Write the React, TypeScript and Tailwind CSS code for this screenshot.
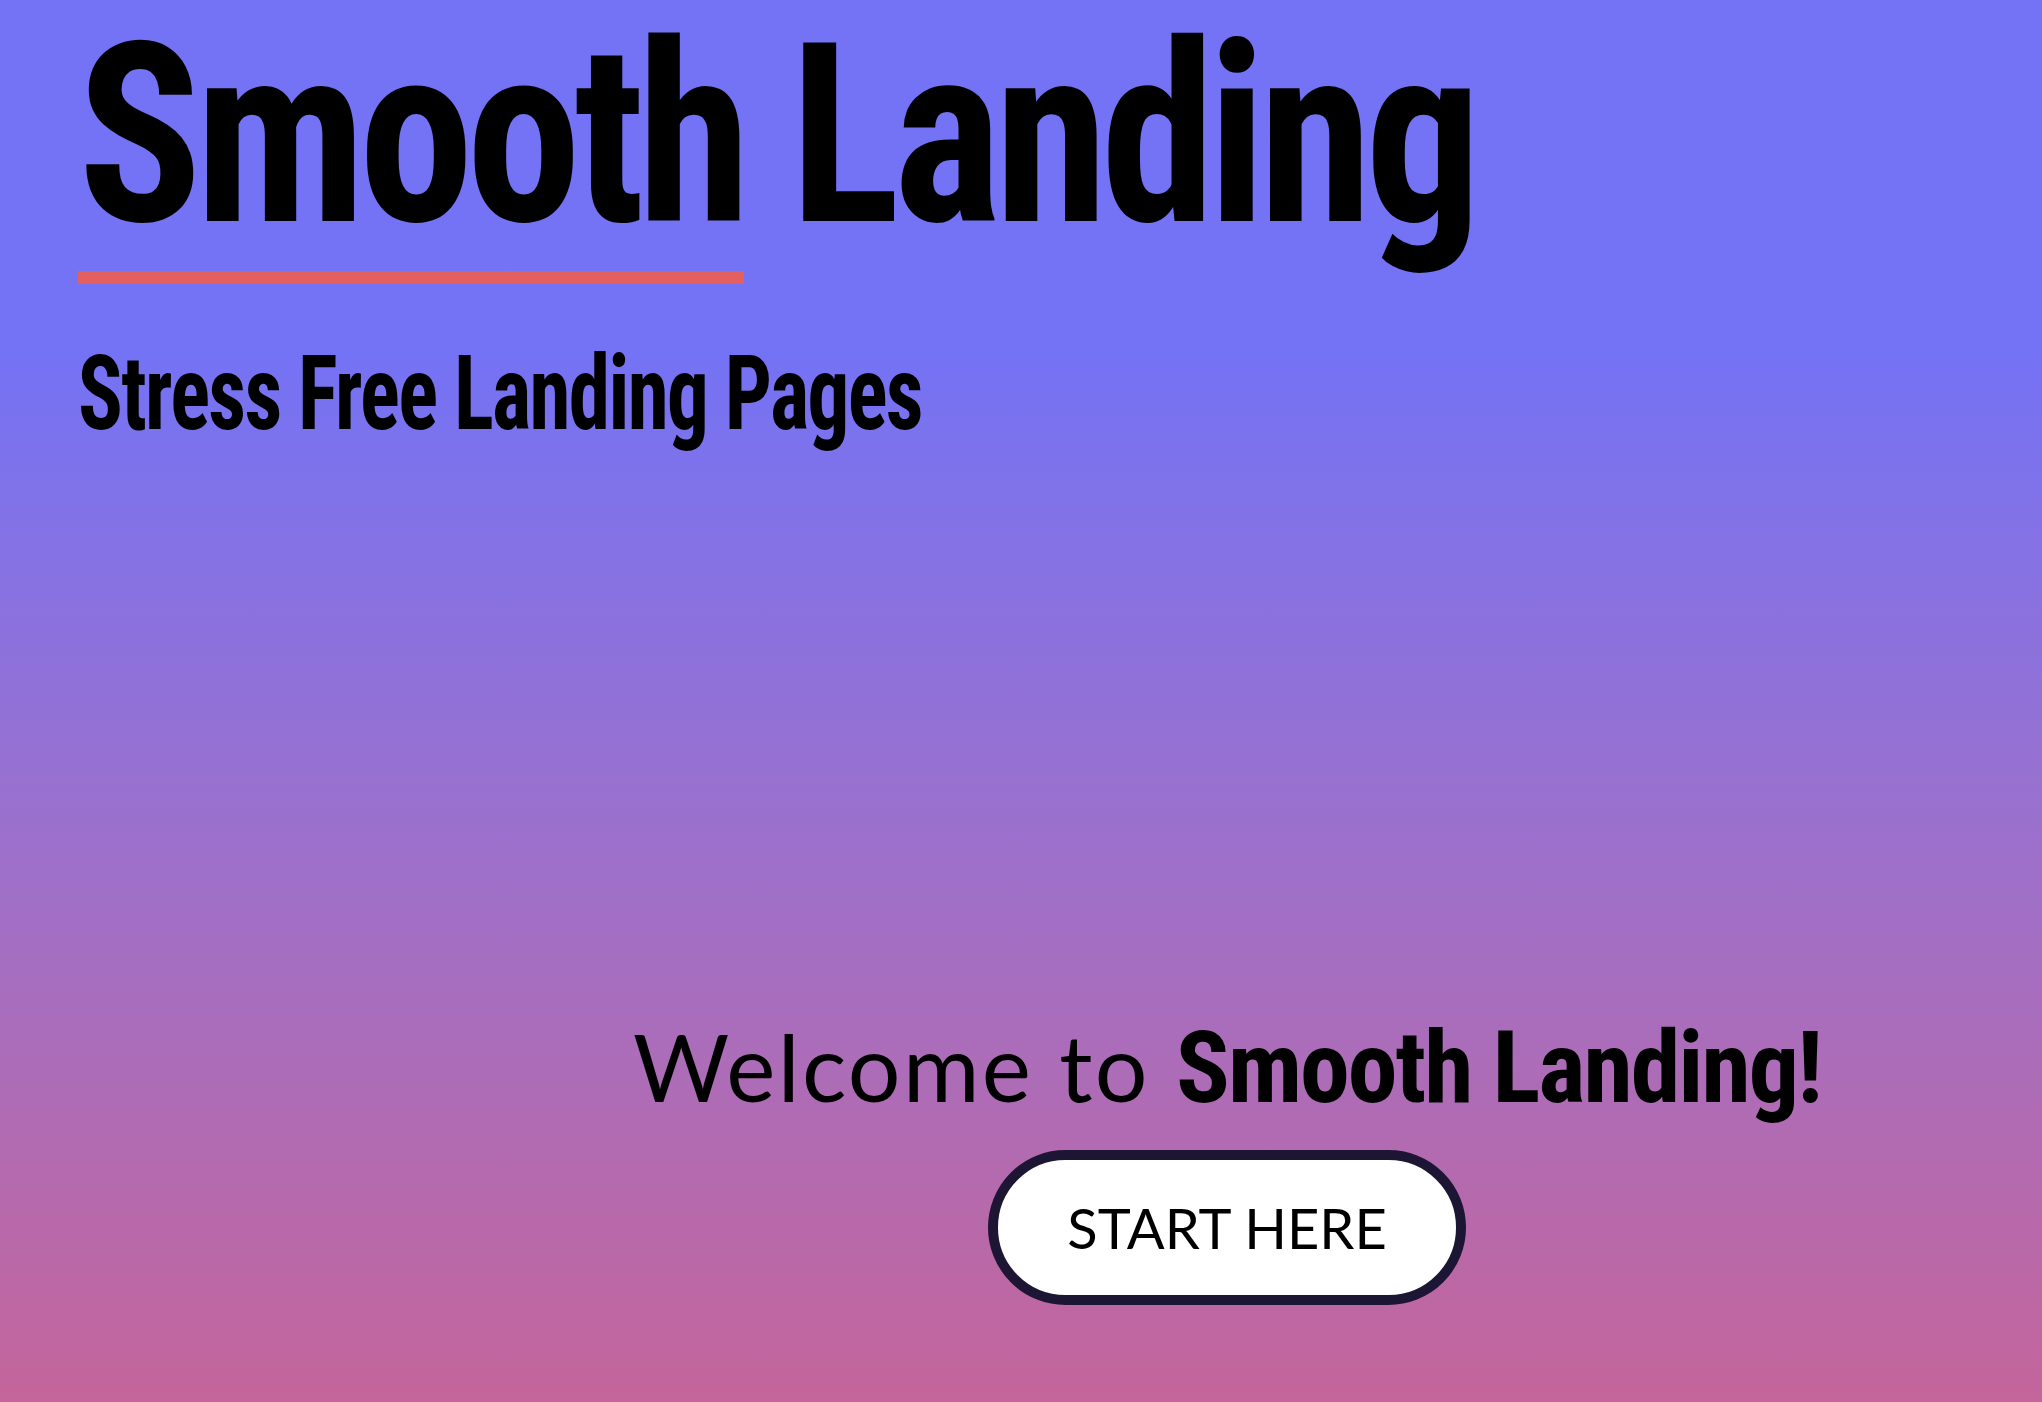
const display = "font-['Roboto_Condensed','Open_Sans',sans-serif]";

const Hero = () => {
  return (
    <div className="flex flex-col pl-[78px] pt-[11px]">
      <h1 className={`${display} origin-left scale-x-[0.92] text-[250px] font-bold leading-none tracking-[-0.03em] text-black`}>
        Smooth Landing
      </h1>
      <div className="mt-[10px] h-[13px] w-[666px] bg-[#e45f5f]" />
      <h2 className={`${display} mt-[58px] origin-left scale-x-[0.8] text-[104px] font-bold leading-none tracking-[-0.02em] text-black`}>
        Stress Free Landing Pages
      </h2>
    </div>
  );
};

const Welcome = () => {
  return (
    <div className="mt-[572px] flex flex-col items-center pl-[412px]">
      <p className="font-['Lato',sans-serif] text-[93px] leading-none tracking-[0.025em] text-black">
        Welcome to{" "}
        <span className={`${display} text-[100px] font-bold tracking-[-0.02em]`}>Smooth Landing!</span>
      </p>
      <button className="mt-[32px] flex h-[155px] w-[478px] items-center justify-center rounded-full border-[10px] border-[#1c1634] bg-white font-['Lato',sans-serif] text-[56px] text-black">
        START HERE
      </button>
    </div>
  );
};

export default function App() {
  return (
    <div className="min-h-[1402px] w-full bg-linear-to-b from-[#7472f5] from-25% to-[#c4649a]">
      <Hero />
      <Welcome />
    </div>
  );
}
